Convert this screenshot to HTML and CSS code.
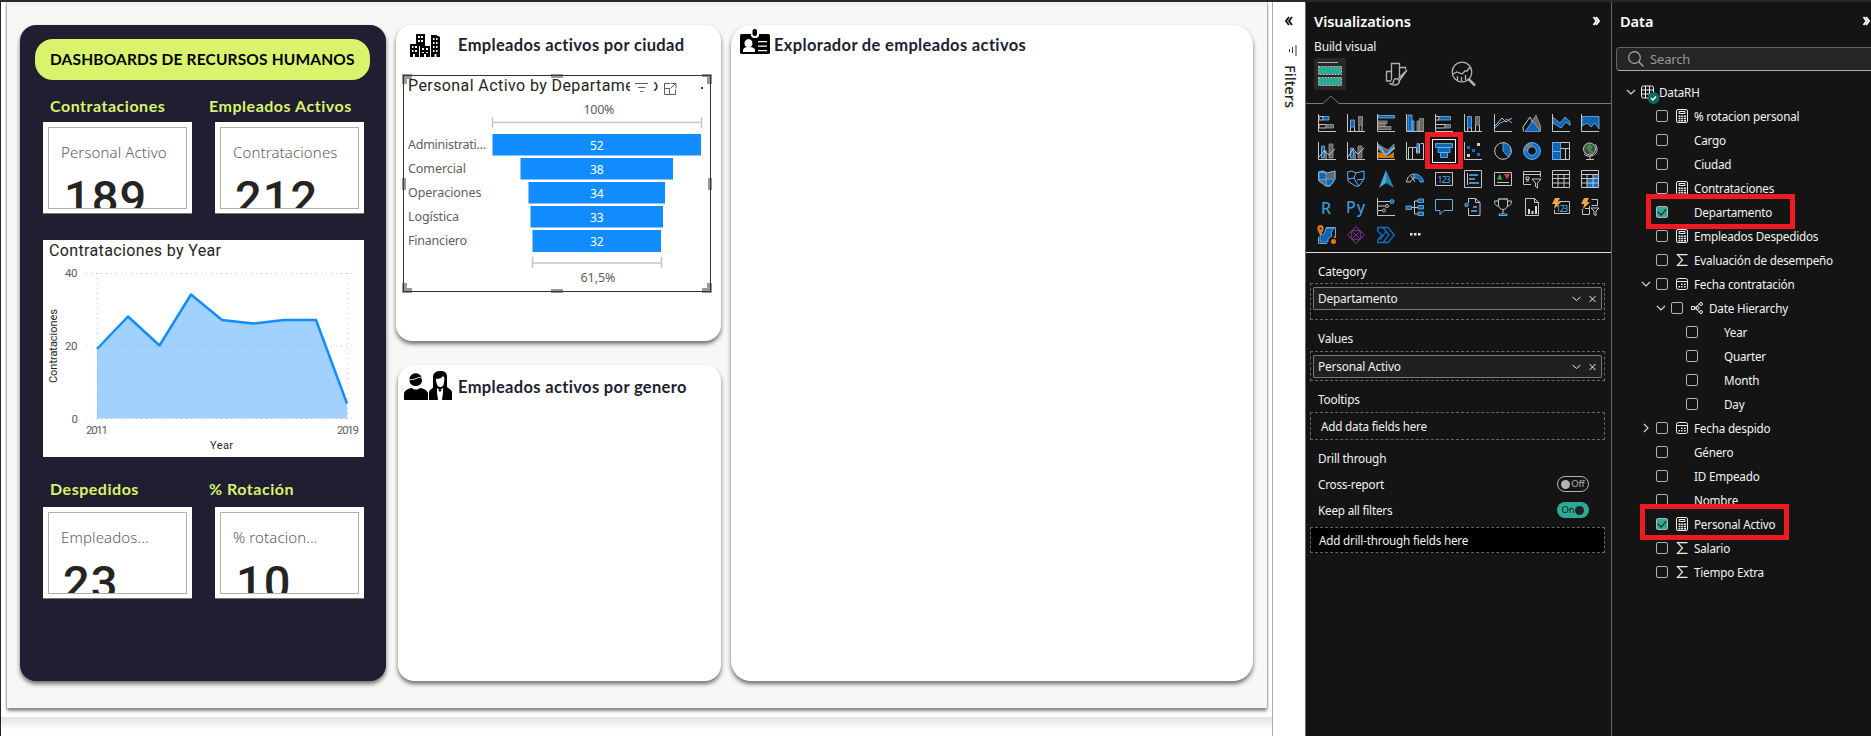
FILE: index.html
```html
<!DOCTYPE html>
<html lang="es">
<head>
<meta charset="utf-8">
<title>Dashboards de recursos humanos</title>
<link rel="stylesheet" href="styles.css">
</head>
<body>
<div class="app">
  <main class="workspace">
    <div class="report">
      <section class="card sidebar">
        <h1 class="pill"><span>DASHBOARDS DE RECURSOS HUMANOS</span></h1>
        <div class="kpi-heads"><h2>Contrataciones</h2><h2>Empleados Activos</h2></div>
        <div class="kpis">
          <div class="kpi"><div class="kpi-in"><p>Personal Activo</p><b class="in3">189</b></div></div>
          <div class="kpi"><div class="kpi-in"><p>Contrataciones</p><b class="in2">212</b></div></div>
        </div>
        <svg class="area" width="321" height="217" viewBox="43 240 321 217">
          <text class="din title" x="49" y="256" textLength="172">Contrataciones by Year</text>
          <path class="grid" d="M86 273.5H356M86 346H356M86 418.500H356M97.500 273V419M347.500 273V419"/>
          <path class="fill" d="M97 349 128 316.500 159.500 345.500 191 294.500 222 320 253 323.500 284 320H316L347 403.500V418.500H97Z"/>
          <path class="line" d="M97 349 128 316.500 159.500 345.500 191 294.500 222 320 253 323.500 284 320H316L347 403.500"/>
          <g class="din axis">
            <text x="65" y="277" textLength="12.500">40</text><text x="65" y="350" textLength="12.500">20</text><text x="71.500" y="422.500">0</text>
            <text x="86" y="434" textLength="22">2011</text><text x="337" y="434" textLength="22">2019</text>
          </g>
          <g class="din axis dark">
            <text x="210" y="449" textLength="23">Year</text>
            <text transform="translate(57 383) rotate(-90)" textLength="74">Contrataciones</text>
          </g>
        </svg>
        <div class="kpi-heads low"><h2>Despedidos</h2><h2>% Rotación</h2></div>
        <div class="kpis">
          <div class="kpi"><div class="kpi-in"><p>Empleados...</p><b class="in2">23</b></div></div>
          <div class="kpi"><div class="kpi-in"><p>% rotacion...</p><b class="in3">10</b></div></div>
        </div>
      </section>

      <div class="middle">
        <section class="card city">
          <header>
            <svg width="31" height="23" viewBox="0 0 31 23"><path d="M6 0h9v12H6zM0 10h9v13H0zM21 1h5l4 2v20h-9zM10 12h10v11H10z"/><path class="w" d="M8 2h2v2H8zM11 2h2v2h-2zM8 6h2v2H8zM11 6h2v2h-2zM2 12h1.500v2H2zM5 12h2v2H5zM2 16h1.500v2H2zM5 16h2v2H5zM3 20h2v3H3zM12 14h2v2h-2zM16 14h2v2h-2zM12 18h2v1h-2zM16 18h2v1h-2zM14 20h2v3h-2zM23 4h1.500v2H23zM26 4h1.500v2H26zM23 8h1.500v2H23zM26 8h1.500v2H26zM23 12h1.500v2H23zM26 12h1.500v2H26zM23 16h1.500v2H23zM26 16h1.500v2H26zM24.500 20h2v3h-2z"/></svg>
            <h3>Empleados activos por ciudad</h3>
          </header>
          <svg class="funnel" width="310" height="220" viewBox="402 74 310 220">
            <path class="handle" d="M402 74h10v5h-5v5h-5zM712 74h-10v5h5v5h5zM402 293h10v-5h-5v-5h-5zM712 293h-10v-5h5v-5h5zM551 74h12v4h-12zM551 289h12v4h-12zM402 178h4v12h-4zM708 178h4v12h-4z"/>
            <rect class="frame" x="403.500" y="75.500" width="307" height="216"/>
            <text class="din title" x="408" y="91" textLength="250">Personal Activo by Departamento</text>
            <path fill="#fff" d="M630 77h24v18h-24zM660 77h47v18h-47z"/>
            <path class="vi" d="M635 83.500h13M638 87.500h7.500M640 91.500h3.500M670 83.500h-5.500v11h11v-5M664.500 88.500h5v6M670.500 88.500l5-5M671 83.500h5v5"/>
            <path fill="#444" d="M701 87h2v2h-2z"/>
            <path class="rail" d="M492.500 117v11M701.500 117v11M492 122.500h209M532.500 257v11M661.500 257v11M532 263h129"/>
            <path class="bars" d="M492.500 134H701v21.500H492.500zM520.500 158H673v21.500H520.500zM528.500 182H665v21.500H528.500zM530.500 206H663v21.500H530.500zM532.500 230H661v22H532.500z"/>
            <g class="sg">
              <text x="408" y="149" textLength="78">Administrati...</text><text x="408" y="173" textLength="58">Comercial</text><text x="408" y="197" textLength="73.500">Operaciones</text><text x="408" y="221" textLength="51">Logística</text><text x="408" y="245" textLength="59">Financiero</text>
              <text x="583.500" y="114" textLength="31">100%</text><text x="580.500" y="282" textLength="35">61,5%</text>
            </g>
            <g class="sg white"><text x="590" y="150">52</text><text x="590" y="174">38</text><text x="590" y="198">34</text><text x="590" y="222">33</text><text x="590" y="246">32</text></g>
          </svg>
        </section>
        <section class="card gender">
          <header>
            <svg width="48" height="30" viewBox="0 0 48 30"><path d="M5.500 9C5 0 18.500 0 18 9c0 8-12.500 8-12.500 0M0 29v-6c0-4 5-5.500 8-6 2 2 6 2 8 0 3 .5 8 2 8 6v6z"/><path d="M25 29v-7c0-4 4-4 4-6V6c0-8 14-8 14-1v10c0 3 5 2 5 7v7z"/><path class="w" d="M32 8c3 0 6-1 7-3 1 1 2 2 1 6 0 4-2 5-4 5s-4-3-4-8M33 17l3 2 3-2 0 5-1 7h-4l-1-7z"/><path d="M34.500 18.500h3l-.5 2h-2z"/><path d="M5.500 8.500c5 1 9-3 10-2 1-1 2 0 2.500 2" fill="none" stroke="#fff" stroke-width=".9"/></svg>
            <h3>Empleados activos por genero</h3>
          </header>
        </section>
      </div>

      <section class="card explorer">
        <header>
          <svg width="30" height="26" viewBox="0 0 30 26"><path d="M1.500 5h27q1.500 0 1.500 1.500v17q0 1.500-1.500 1.500h-27Q0 25 0 23.500v-17Q0 5 1.500 5z"/><path class="w" d="M11 3h8v4l-2 2h-4l-2-2z"/><rect x="12.500" y="0" width="4.500" height="7" rx="2"/><path class="w" d="M3 23v-2.500q1-2.500 4-2.500c-4-1-3-8 1.500-8s5.500 7 1.500 8q4 0 5 2.500V23zM18 12h9v1.300h-9zM18 16.500h9v1.300h-9zM18 21h9v1.300h-9z"/></svg>
          <h3>Explorador de empleados activos</h3>
        </header>
      </section>
    </div>
  </main>

  <aside class="filters">
    <svg width="9" height="10" viewBox="0 0 9 10"><path d="M4 1 1 5l3 4M7 1 4 5l3 4"/></svg>
    <svg class="fi" width="8" height="11" viewBox="0 0 8 11"><path class="thin" d="M.5 4v3M3.500 2v6M7 0v11"/></svg>
    <span>Filters</span>
  </aside>

  <aside class="viz">
    <div class="pane-head"><h2>Visualizations</h2><svg width="8" height="10" viewBox="0 0 8 10"><path d="M1.500 1 4.500 5l-3 4M4 1 7 5 4 9"/></svg></div>
    <p class="build">Build visual</p>
    <div class="tabs">
      <span class="tab on"><svg width="24" height="26" viewBox="0 0 24 26"><path stroke="#b3b3b3" d="M0 1.500h20"/><path fill="#2aac94" d="M1 6h22v7H1zM1 17h22v7H1z"/><path fill="none" stroke="#c8c8c8" stroke-dasharray="2 1" d="M.5 5.500h23v8H.5zM.5 16.500h23v8H.5z"/></svg></span>
      <span class="tab"><svg width="24" height="24" viewBox="0 0 24 24" class="tg"><path d="M6 19H1.500V9.500h5v9M6.500 13V1.500h8v14M14.500 5.500h6v2M22 8 12.500 17.500M22 8l-7.500 10.500M12.500 17c-3-1-4 1-4 3 0 1-1 2-3 2 3 2 9 1 9-3z"/></svg></span>
      <span class="tab"><svg width="26" height="26" viewBox="0 0 26 26" class="tg"><circle cx="11" cy="11" r="9.800"/><path d="M2 13l4-2 5 2 3-3 2 0 3-4M6.500 15v4M10.500 16v4M14.500 14v5"/><path stroke-width="2.500" d="M17.500 18l6.500 6.500"/></svg></span>
    </div>
    <svg class="notch" width="305" height="9" viewBox="0 0 305 9"><path d="M0 8.500h17l8-7.500 8 7.500h272"/></svg>
    <div class="gallery">
      <svg viewBox="0 0 18 18"><path class="a" d="M.5 0v17.500H18"/><path class="a" d="M1 2.500h4V6H1z"/><path class="c" d="M5 2.500h6V6H5z"/><path class="a" d="M1 10.500h7V14H1z"/><path class="g" d="M8 10.500h7.500V14H8z"/></svg>
      <svg viewBox="0 0 18 18"><path class="a" d="M.5 0v17.500H18M3.500 13v4M7.500 13v4M12 11v6M15 11v6"/><path class="c" d="M3.500 6h4v7h-4z"/><path class="g" d="M11.500 2.500h4V11h-4z"/></svg>
      <svg viewBox="0 0 18 18"><path class="a" d="M.5 0v17.500H18"/><path class="c" d="M1 1.500h16.500V4H1z"/><path class="g" d="M1 7h9v2.500H1zM1 9.500h7v3H1zM1 12.500h13v3H1z"/></svg>
      <svg viewBox="0 0 18 18"><path class="a" d="M.5 0v17.500H18"/><path class="c" d="M2 1h4v16H2zM6 7h2v10H6z"/><path class="g" d="M11 7h2v10h-2zM13.500 4.500h4V17h-4z"/></svg>
      <svg viewBox="0 0 18 18"><path class="a" d="M.5 0v17.500H18M1 2.500h3V6H1M1 10.500h9V14H1"/><path class="c" d="M4 2.500h11.500V6H4z"/><path class="g" d="M10 10.500h5.500V14H10z"/></svg>
      <svg viewBox="0 0 18 18"><path class="a" d="M.5 0v17.500H18M3.500 14v3M7.500 14v3M11.500 11v6M15.500 11v6"/><path class="c" d="M3.500 2.500h4V14h-4z"/><path class="g" d="M11.500 2.500h4V11h-4z"/></svg>
      <svg viewBox="0 0 18 18"><path class="a" d="M.5 0v17.500H18M1 12l7-8 4 4 6-4"/><path class="l" d="M1 14l5-5 3-1 4-3 5 4"/></svg>
      <svg viewBox="0 0 18 18"><path class="a" d="M.5 17.500 0 13 7 3l6 12"/><path class="g" d="M8 9l5-8 4.500 11v5z"/><path class="c" d="M2 17.500 10 7l7.500 10.500z"/></svg>
      <svg viewBox="0 0 18 18"><path class="c" d="M.5 3 8 9l5-6 5 4.500v4L14 8l-5 6-8-5z"/><path class="a" d="M.5 0v17.500H18"/></svg>
      <svg viewBox="0 0 18 18"><path class="c" d="M1 2.500h17V15l-4-6-4 4-4-4-5 3z"/><path class="a" d="M.5 0v17.500H18"/></svg>

      <svg viewBox="0 0 18 18"><path class="c" d="M3.500 4h3v12h-3z"/><path class="g" d="M11 2h4v14h-4z"/><path class="a" d="M.5 0v17.500H18M1 15l5-6 5 4 6-6M8 8v9"/></svg>
      <svg viewBox="0 0 18 18"><path class="c" d="M3.500 6h3v10h-3z"/><path class="g" d="M11 4h4v12h-4z"/><path class="a" d="M.5 0v17.500H18M1 15l5-8 5 5 6-6M8 10v7"/></svg>
      <svg viewBox="0 0 18 18"><path fill="#d97706" d="M1 10l5 1 5 3 6-4v6H1z"/><path class="g" d="M1 2l6 4 4 2 6-6v5l-5 5H7L1 7z"/><path class="l" stroke-width="2" d="M1 5c5 0 5 8 8 8s4-7 9-7"/><path class="a" d="M.5 0v17.500H18"/></svg>
      <svg viewBox="0 0 18 18"><path class="a" d="M.5 0v17.500H18M2.500 17V5.500h4V17M6.500 5.500h4V11h3V2"/><path class="c" d="M11 1.500h2v8h-2z"/><path class="a" d="M14.500 1.500h3V17"/></svg>
      <svg viewBox="0 0 18 18"><path class="c" d="M.5 1.500h17v4H.5zM3 5.500h12v5H3zM5.500 10.500h7v5h-7z"/></svg>
      <svg viewBox="0 0 18 18"><path class="a" d="M.5 0v17.500H18"/><path fill="#1071c7" d="M3 4h3v3H3zM8 7h3v3H8zM13 11h3v3h-3z"/><path fill="#ccc" d="M13 1h3v3h-3zM3 12h3v3H3z"/></svg>
      <svg viewBox="0 0 18 18"><circle class="a" cx="9" cy="9" r="8.300"/><path class="c" d="M9 .7a8.300 8.300 0 0 1 5.500 14.300L9 9z"/></svg>
      <svg viewBox="0 0 18 18"><circle cx="9" cy="9" r="6.500" fill="none" stroke="#1071c7" stroke-width="4"/><path d="M2.500 9A6.500 6.500 0 0 1 9 2.500" fill="none" stroke="#777" stroke-width="4"/><circle class="l" cx="9" cy="9" r="8.400"/><circle class="l" cx="9" cy="9" r="4.300"/></svg>
      <svg viewBox="0 0 18 18"><path class="a" d="M.5.5h17v17H.5zM9 6.500h8.500M13.500 6.500v11"/><path class="c" d="M.5.5h8v9h-8zM.5 9.500h8v8h-8z"/></svg>
      <svg viewBox="0 0 18 18"><path class="a" d="M14 2c4 5 2 11-4 12-3 .5-5 0-7-2M9 14v3.500M5 17.500h8"/><circle cx="8.500" cy="7" r="6" fill="#444" stroke="#ccc"/><path fill="#3a8a4a" d="M4 5l4-3 4 2-2 4 3 2-4 2-2-4z"/></svg>

      <svg viewBox="0 0 18 18"><path class="g" d="M.5 2 5 1l4 2 8-2v8l-5 7H8L1 11z"/><path class="c" d="M1 2l7 1v6l-7 1zM8 9h6l2 2-4 5-4-1z"/><path class="l" d="M.5 2 5 1l4 2 8-2v8l-5 7H8L1 11z"/></svg>
      <svg viewBox="0 0 18 18"><path class="l" d="M.5 2 5 1l4 2 8-2v8l-5 7H8L1 11zM1 9l6-1 2-5M7 8l2 4 3 4M10 10l7-1"/></svg>
      <svg viewBox="0 0 18 18"><path fill="#4aa6dc" d="M9 0 2 18l7-5z"/><path fill="#2682b8" d="M9 0l8 18-8-5z"/></svg>
      <svg viewBox="0 0 18 18"><path class="a" d="M.5 12C1 8 3 5 8 4v4c-2 1-3 2-3.500 4z"/><path class="c" d="M8 4c6 0 9 4 9.500 8H14c0-3-3-4-6-4z"/><path class="a" d="M9 12 5 6"/></svg>
      <svg viewBox="0 0 18 18"><path class="a" d="M.5 2.500h17v13H.5z"/><text class="num" x="2.500" y="12.500" textLength="13">123</text></svg>
      <svg viewBox="0 0 18 18"><path class="a" d="M.5.500h17v17H.5zM3.500 3v12"/><path class="l" stroke-width="1.500" d="M5 5h9M5 9h6M5 13h10"/></svg>
      <svg viewBox="0 0 18 18"><path class="a" d="M.5 2.500h17v13H.5zM3 12.500h12"/><path fill="#42a74b" d="M3 9.500 5.700 4l2.800 5.500z"/><path fill="#e33a3a" d="M10 4h6l-3 5.500z"/></svg>
      <svg viewBox="0 0 18 18"><path class="a" d="M8 14.500H.5V1.500h17V7M.5 4.500h17M3 7h3v2.500H3zM3 11h3M9 9h9l-3.500 4v5l-2-1.500V13z"/></svg>
      <svg viewBox="0 0 18 18"><path class="a" d="M.5.500h17v17H.5zM.5 4.500h17M.5 8.500h17M.5 13h17M6 4v13M12 4v13"/></svg>
      <svg viewBox="0 0 18 18"><path fill="#1071c7" d="M6 9h6v8H6zM12 5h5v12h-5z"/><path class="a" d="M.5.500h17v17H.5zM.5 4.500h17M.5 8.500h17M.5 13h17M6 4v13M12 4v13"/></svg>

      <svg viewBox="0 0 18 18"><text class="ltr" x="3" y="15.500">R</text></svg>
      <svg viewBox="0 0 18 18"><text class="ltr" x="-1" y="14.500" textLength="19">Py</text></svg>
      <svg viewBox="0 0 18 18"><path class="a" d="M.5 0v17.500H18M1 3.500h12M1 8h7M1 12.500h4"/><circle class="c" cx="15" cy="3.500" r="2"/><circle class="a" cx="10" cy="8" r="1.500"/><circle class="a" cx="7" cy="12.500" r="1.500"/></svg>
      <svg viewBox="0 0 18 18"><path class="a" d="M6 9.500h6M8.500 3v13H12M8.500 3H12"/><path class="c" d="M0 8h5.500v3.500H0zM12 1h5.500v3.500H12zM12 7.500h5.500V11H12zM12 14h5.500v3.500H12z"/></svg>
      <svg viewBox="0 0 18 18"><path class="l" d="M.5 1.500h17v11H9l-4 4v-4H.5z"/></svg>
      <svg viewBox="0 0 18 18"><path class="a" d="M4.500 5V.5h7l4.500 4v13H4.500V10M11.500.5v4H16"/><path class="l" stroke-width="1.500" d="M9 9h4M7 13h6"/><circle class="c" cx="2.500" cy="7" r="1.800"/></svg>
      <svg viewBox="0 0 18 18"><path class="a" d="M4.500 1h9v6c0 6-9 6-9 0zM4.500 3H.5c0 4 2 5 4 5M13.500 3h4c0 4-2 5-4 5M9 11.500V16"/><path class="l" d="M4 1h10M5 16h8v1.500H5z"/></svg>
      <svg viewBox="0 0 18 18"><path class="a" d="M2.500.500h9l4 4v13h-13zM11.500.5v4h4"/><path fill="#ddd" d="M5 11h2v5H5zM8.500 13h2v3h-2zM12 8h2v8h-2z"/></svg>
      <svg viewBox="0 0 18 18"><path class="a" d="M7 3.500h10.500v12H2.500V12"/><text class="num" x="4" y="13.500" textLength="12">123</text><path fill="#f3a545" d="M3 0h5L6 4h3L2 11l1-5H0z"/></svg>
      <svg viewBox="0 0 18 18"><path class="a" d="M10.500 1.500h6v6h-6M1.500 11v5.500h7v-6H4M8.500 8v2.500M10 10h8l-3 3v4.500l-2-1V13z"/><path fill="#f3a545" d="M3 0h5L6 4h3L2 11l1-5H0z"/></svg>

      <svg viewBox="0 0 18 18"><path class="c" d="M8 2h8l-3 5 1 3-4 3v3H2V9l4-1z"/><path class="l" d="M8 1.500h9.500V10M9 17.500H.5V11"/><path fill="#e17a1c" d="M2.500-1C-1-1-1 3 0 5l2.500 5L5 5c1-2 1-6-2.500-6"/><circle cx="2.500" cy="2.500" r="1" fill="#141414"/><circle cx="15.500" cy="15.500" r="2.500" fill="#e17a1c"/><circle cx="17" cy="11" r="1.200" fill="#e17a1c"/></svg>
      <svg viewBox="0 0 18 18"><path fill="none" stroke="#8b2f97" d="M9 .5 17.500 9 9 17.500.5 9zM5 5l8 8M13 5l-8 8M5 9a2.500 2.500 0 0 1 4-4 2.500 2.500 0 0 1 4 4 2.500 2.500 0 0 1-4 4 2.500 2.500 0 0 1-4-4"/></svg>
      <svg viewBox="0 0 18 18"><path fill="none" stroke="#1071c7" stroke-width="1.300" d="M.7 5V1.500H11L17.300 9 11 16.500H.7V14L5 9zM6 1.500 12 9l-6 7.500M9 5.500 3 14"/></svg>
      <svg viewBox="0 0 18 18"><path fill="#e8e8e8" d="M4 7h2.500v2.500H4zM8 7h2.500v2.500H8zM12 7h2.500v2.500H12z"/></svg>
      <i class="pick"></i>
    </div>
    <div class="wells">
      <h4>Category</h4>
      <div class="well tall"><div class="chip"><span>Departamento</span><svg width="24" height="8" viewBox="0 0 24 8"><path d="M.5 2 4.500 5.500 8.500 2M17.500 1l6 6M23.500 1l-6 6"/></svg></div></div>
      <h4 class="h-val">Values</h4>
      <div class="well"><div class="chip"><span>Personal Activo</span><svg width="24" height="8" viewBox="0 0 24 8"><path d="M.5 2 4.500 5.500 8.500 2M17.500 1l6 6M23.500 1l-6 6"/></svg></div></div>
      <h4 class="h-tip">Tooltips</h4>
      <div class="well empty">Add data fields here</div>
      <h4 class="h-drill">Drill through</h4>
      <div class="opt"><span>Cross-report</span><span class="toggle off"><i></i>Off</span></div>
      <div class="opt"><span>Keep all filters</span><span class="toggle yes">On<i></i></span></div>
      <div class="well drop">Add drill-through fields here</div>
    </div>
  </aside>

  <aside class="data">
    <div class="pane-head"><h2>Data</h2><svg width="8" height="10" viewBox="0 0 8 10"><path d="M1.500 1 4.500 5l-3 4M4 1 7 5 4 9"/></svg></div>
    <div class="search"><svg width="16" height="16" viewBox="0 0 16 16"><circle cx="6.500" cy="6.500" r="5.800"/><path d="M10.500 10.500l5 5"/></svg><span>Search</span></div>
    <ul class="tree">
      <li class="root"><svg class="chev" viewBox="0 0 10 10"><path d="M1 3l4 4 4-4"/></svg><svg class="tbl" width="19" height="20" viewBox="0 0 19 20"><path d="M2.500 1h8q2 0 2 2v8q0 2-2 2h-8q-2 0-2-2V3q0-2 2-2zM.5 5h12M.5 9h12M4.500 1v12M8.500 1v12"/><circle cx="12.500" cy="13" r="6" fill="#0f6b5c" stroke="none"/><path stroke="#fff" stroke-width="1.500" d="M10 13l2 2 3-3.500"/></svg><span>DataRH</span></li>
      <li><i class="cb"></i><svg class="ic"><use href="#calc"/></svg><span>% rotacion personal</span></li>
      <li><i class="cb"></i><svg class="ic"></svg><span>Cargo</span></li>
      <li><i class="cb"></i><svg class="ic"></svg><span>Ciudad</span></li>
      <li><i class="cb"></i><svg class="ic"><use href="#calc"/></svg><span>Contrataciones</span></li>
      <li class="marked"><i class="cb on"></i><svg class="ic"></svg><span>Departamento</span></li>
      <li><i class="cb"></i><svg class="ic"><use href="#calc"/></svg><span>Empleados Despedidos</span></li>
      <li><i class="cb"></i><svg class="ic"><use href="#sum"/></svg><span>Evaluación de desempeño</span></li>
      <li class="exp"><svg class="chev" viewBox="0 0 10 10"><path d="M1 3l4 4 4-4"/></svg><i class="cb"></i><svg class="ic"><use href="#cal"/></svg><span>Fecha contratación</span></li>
      <li class="exp sub"><svg class="chev" viewBox="0 0 10 10"><path d="M1 3l4 4 4-4"/></svg><i class="cb"></i><svg class="ic"><use href="#hier"/></svg><span>Date Hierarchy</span></li>
      <li class="leaf"><i class="cb"></i><svg class="ic"></svg><span>Year</span></li>
      <li class="leaf"><i class="cb"></i><svg class="ic"></svg><span>Quarter</span></li>
      <li class="leaf"><i class="cb"></i><svg class="ic"></svg><span>Month</span></li>
      <li class="leaf"><i class="cb"></i><svg class="ic"></svg><span>Day</span></li>
      <li class="exp"><svg class="chev" viewBox="0 0 10 10"><path d="M3 1l4 4-4 4"/></svg><i class="cb"></i><svg class="ic"><use href="#cal"/></svg><span>Fecha despido</span></li>
      <li><i class="cb"></i><svg class="ic"></svg><span>Género</span></li>
      <li><i class="cb"></i><svg class="ic"></svg><span>ID Empeado</span></li>
      <li><i class="cb"></i><svg class="ic"></svg><span>Nombre</span></li>
      <li class="marked second"><i class="cb on"></i><svg class="ic"><use href="#calc"/></svg><span>Personal Activo</span></li>
      <li><i class="cb"></i><svg class="ic"><use href="#sum"/></svg><span>Salario</span></li>
      <li><i class="cb"></i><svg class="ic"><use href="#sum"/></svg><span>Tiempo Extra</span></li>
    </ul>
  </aside>
</div>
<svg class="defs" width="0" height="0">
  <symbol id="calc" viewBox="0 0 12 14"><path fill="none" stroke="#eee" d="M2 .5h8Q11.500.500 11.500 2v10q0 1.500-1.500 1.500H2Q.5 13.500.500 12V2Q.5.500 2 .5zM3 2.500h6v2H3z"/><path fill="#eee" d="M2.500 6.500h2v1.500h-2zM5.200 6.500h2v1.500h-2zM8 6.500h2v1.500H8zM2.500 8.800h2v1.400h-2zM5.200 8.800h2v1.400h-2zM8 8.800h2v1.400H8zM2.500 11h2v1.400h-2zM5.200 11h2v1.400h-2zM8 11h2v1.400H8z"/></symbol>
  <symbol id="sum" viewBox="0 0 12 14"><path fill="none" stroke="#eee" stroke-width="1.200" d="M11.500 1.600H1.500L6.500 7l-5 5.400h10"/></symbol>
  <symbol id="cal" viewBox="0 0 12 14"><path fill="none" stroke="#eee" d="M2.500 1.500h7q2 0 2 2v7q0 2-2 2h-7q-2 0-2-2v-7q0-2 2-2zM.5 4.500h11"/><path fill="#eee" d="M5 6.500h1.500V8H5zM8 6.500h1.500V8H8zM2.500 9H4v1.500H2.500zM5 9h1.500v1.500H5zM8 9h1.500v1.500H8z"/></symbol>
  <symbol id="hier" viewBox="0 0 12 14"><path fill="none" stroke="#eee" d="M.5 5.500h3v3h-3zM3.500 7l5-4M3.500 7l5 4M7.500 7h1"/><circle cx="10" cy="3" r="1.500" fill="none" stroke="#eee"/><circle cx="6.500" cy="7" r="1.400" fill="none" stroke="#eee"/><circle cx="10" cy="11" r="1.500" fill="none" stroke="#eee"/></symbol>
</svg>
</body>
</html>
```
FILE: styles.css
```css
*, *::after { box-sizing: border-box; margin: 0; padding: 0; }
body { width: 1871px; height: 736px; overflow: hidden; background: #fff; font-family: "Noto Sans", "Open Sans", sans-serif; }
.app { display: flex; height: 736px; border-top: 2px solid #292827; }
svg { display: block; flex: none; }
.defs { position: absolute; }

/* report canvas */
.workspace { width: 1272px; flex: none; border-left: 1px solid #252423; background: linear-gradient(#fff 0 709px, #fff 715px, #e4e4e4 715px, #fff 728px); padding-left: 6px; }
.report { width: 1260px; height: 706px; padding: 23px 0 0 13px; display: flex; background: linear-gradient(#ededeb, #f7f7f5 6px); box-shadow: 0 3px 3px #888, -1px 0 1px #ccc, 1px 0 1px #ccc; clip-path: inset(0 -4px -8px -4px); }
.card { background: #fff; border-radius: 16px; box-shadow: 0 3px 4px rgba(0,0,0,.55); flex: none; }
.sidebar { width: 366px; height: 656px; background: #201e30; padding: 14px 0 0 15px; }
.pill { width: 335px; height: 41px; border-radius: 18px; background: #d9f46c; display: flex; align-items: center; padding-left: 15px; font: bold 15.500px/41px Lato, sans-serif; letter-spacing: .16px; white-space: nowrap; }
.kpi-heads { display: flex; padding-left: 15px; height: 42px; align-items: flex-start; }
.kpi-heads h2 { font: bold 16px/20px Lato, sans-serif; color: #d9f46c; white-space: nowrap; width: 159px; padding-top: 16px; letter-spacing: .52px; }
.kpi-heads.low { height: 50px; }
.kpi-heads.low h2 { padding-top: 22px; }
.kpis { display: flex; gap: 23px; padding-left: 8px; }
.kpi { width: 149px; height: 92px; background: #fff; padding: 5px; border-bottom: 1px solid #777; }
.kpi-in { width: 139px; height: 82px; border: 1px solid #b3b0ad; overflow: hidden; padding: 13px 0 0 12px; }
.kpi p { font-size: 15px; line-height: 22px; font-weight: 300; color: #605e5c; white-space: nowrap; letter-spacing: .12px; }
.kpi b { display: block; font: 500 47px/58px Roboto, sans-serif; color: #252423; margin-top: 6px; letter-spacing: 1px; }
.in3 { padding-left: 3px; }
.in2 { padding-left: 2px; }
.area { margin: 26px 0 0 8px; background: #fff; }
.din { font-family: Roboto, sans-serif; }
.title { font-size: 16px; fill: #252423; }
.axis { font-size: 11.500px; fill: #605e5c; }
.axis.dark { fill: #252423; font-size: 11px; }
.grid { stroke: #ccc; stroke-dasharray: 1 4; fill: none; }
.fill { fill: #118dff; opacity: .4; }
.line { fill: none; stroke: #118dff; stroke-width: 2.500; stroke-linejoin: round; }

.middle { margin-left: 10px; width: 325px; display: flex; flex-direction: column; align-items: flex-end; gap: 24px; flex: none; }
.city { width: 325px; height: 316px; }
.gender { width: 323px; height: 316px; }
.card header { display: flex; align-items: flex-start; }
h3 { font: bold 16.500px/22px Lato, sans-serif; color: #201e30; white-space: nowrap; letter-spacing: .34px; }
.w { fill: #fff; }
.city header { height: 49px; padding: 9px 0 0 14px; gap: 17px; }
.gender header { padding: 6px 0 0 6px; gap: 6px; }
.gender h3 { padding-top: 5px; }
.funnel { margin-left: 6px; }
.handle { fill: #999; }
.frame { fill: none; stroke: #333; }
.vi { fill: none; stroke: #605e5c; }
.rail { fill: none; stroke: #c8c6c4; stroke-width: 1.500; }
.bars { fill: #118dff; }
.sg { font-size: 12.500px; fill: #605e5c; }
.sg.white { fill: #fff; font-size: 12px; }
.explorer { width: 522px; height: 656px; margin-left: 10px; border-radius: 20px; }
.explorer header { padding: 4px 0 0 9px; gap: 4px; }
.explorer h3 { padding-top: 5px; }

/* collapsed filters pane */
.filters { width: 33px; flex: none; border-left: 1px solid #aaa; background: #fff; display: flex; flex-direction: column; align-items: flex-start; padding: 14px 0 0 12px; }
.filters path { fill: none; stroke: #111; stroke-width: 1.800; }
.filters .thin { stroke-width: 1; stroke: #333; }
.fi { margin: 19px 0 9px 4px; }
.filters span { writing-mode: vertical-rl; font-size: 14.700px; line-height: 18px; color: #252423; font-weight: 500; margin-left: -3px; }

/* dark panes */
.viz, .data { background: #141414; color: #f3f2f1; border-left: 1px solid #666; flex: none; font-size: 11.700px; letter-spacing: -.2px; white-space: nowrap; }
.viz { width: 306px; }
.data { width: 260px; flex: 1; }
.pane-head { display: flex; height: 38px; padding: 8px 11px 0 8px; justify-content: space-between; }
.pane-head h2 { font-size: 14.600px; line-height: 22px; font-weight: 600; color: #fff; letter-spacing: -.07px; }
.pane-head svg { margin-top: 6px; }
.pane-head path { fill: none; stroke: #fff; stroke-width: 1.800; }
.build { padding-left: 8px; line-height: 14px; height: 18px; font-size: 12px; letter-spacing: -.15px; }
.tabs { display: flex; gap: 35px; padding-left: 8px; height: 34px; }
.tab { width: 32px; height: 32px; display: grid; place-items: center; }
.tab.on { background: #292827; border-radius: 2px; }
.tg { fill: none; stroke: #b3b3b3; stroke-width: 1.300; }
.notch { margin-top: 3px; fill: none; stroke: #777; }
.gallery { position: relative; display: grid; grid-template-columns: repeat(10, 18px); grid-auto-rows: 18px; column-gap: 11.270px; row-gap: 10px; padding: 10px 0 0 12px; height: 149px; border-bottom: 1px solid #e0e0e0; }
.gallery svg { width: 18px; height: 18px; overflow: visible; }
.a { fill: none; stroke: #c8c6c4; }
.c { fill: #1065b0; stroke: #6db8f2; stroke-width: .8; }
.g { fill: #666; stroke: #999; stroke-width: .8; }
.l { fill: none; stroke: #5fb2f0; }
.num { font-size: 8.500px; fill: #5fb2f0; }
.ltr { font-size: 16px; font-weight: 500; fill: #3f97d5; }
.pick { position: absolute; left: 119px; top: 28px; width: 38px; height: 37px; border: 5px solid #ed1c24; }
.pick::after { content: ""; position: absolute; inset: 2px 2px 1px 2px; border: 1px solid #fff; }

.wells { padding: 9px 0 0 4px; }
.wells h4 { font-weight: 400; font-size: 11.800px; line-height: 18px; padding: 0 0 0 8px; height: 21px; }
.well { width: 295px; height: 30px; border: 1px dashed #666; padding: 3px 2px; }
.well.tall { height: 37px; }
.chip { height: 23px; border: 1px solid #777; background: #202020; border-radius: 1px; display: flex; justify-content: space-between; align-items: center; padding: 0 5px 0 4px; line-height: 21px; font-size: 11.900px; }
.chip path { fill: none; stroke: #eee; }
.wells .h-val { margin-top: 9px; height: 22px; }
.wells .h-tip { margin-top: 9px; height: 22px; }
.well.empty { height: 28px; padding: 0 0 0 10px; line-height: 26px; }
.wells .h-drill { margin-top: 9px; height: 22px; }
.opt { height: 26px; line-height: 24px; display: flex; justify-content: space-between; align-items: center; padding: 0 22px 0 8px; }
.toggle { width: 32px; height: 16px; border-radius: 8px; font-size: 9.500px; display: flex; align-items: center; justify-content: center; gap: 1px; line-height: 14px; }
.toggle i { width: 9px; height: 9px; border-radius: 50%; background: #b3b3b3; }
.off { border: 1px solid #b3b3b3; color: #b3b3b3; }
.yes { background: #2aac94; color: #141414; }
.yes i { background: #222; }
.well.drop { margin-top: 4px; height: 26px; line-height: 24px; padding: 0 0 0 8px; background: #000; }

.data .pane-head { height: 45px; padding: 8px 1px 0 8px; }
.search { height: 24px; margin-left: 4px; border: 1px solid #666; border-right: 0; border-bottom-color: #aaa; border-radius: 4px 0 0 4px; background: #252525; display: flex; align-items: center; gap: 6px; padding-left: 11px; color: #999; font-size: 13px; line-height: 22px; letter-spacing: -.15px; }
.search svg { fill: none; stroke: #aaa; stroke-width: 1.200; }
.tree { list-style: none; padding-top: 9px; }
.tree li { height: 24px; display: flex; align-items: center; padding-left: 44px; position: relative; }
.tree .root { padding-left: 14px; }
.tree .exp { padding-left: 29px; }
.tree .sub { padding-left: 44px; }
.tree .leaf { padding-left: 74px; }
.chev { width: 10px; height: 10px; margin-right: 5px; fill: none; stroke: #ddd; stroke-width: 1.100; }
.tbl { margin-top: 5px; fill: none; stroke: #eee; }
.root span { margin-left: -1px; }
.cb { width: 12px; height: 12px; border: 1px solid #b3b3b3; border-radius: 2px; flex: none; }
.cb.on { background: #2aac94; }
.cb.on::after { content: ""; display: block; width: 8px; height: 5px; border: solid #111; border-width: 0 0 1px 1px; transform: translate(1px, 1.500px) rotate(-48deg); }
.ic { width: 12px; height: 14px; margin: 0 6px 0 8px; }
.marked::after { content: ""; position: absolute; left: 34px; top: -6px; width: 149px; height: 35px; border: 5px solid #ed1c24; }
.second::after { left: 28px; top: -8px; height: 36px; }
```
